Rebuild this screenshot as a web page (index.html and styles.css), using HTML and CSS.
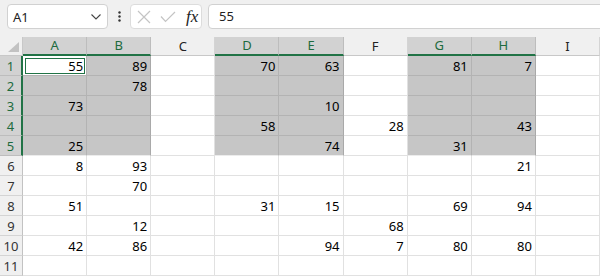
FILE: index.html
```html
<!DOCTYPE html>
<html lang="en">
<head>
    <meta charset="UTF-8">
    <meta name="viewport" content="width=device-width, initial-scale=1.0">
    <title>Sheet</title>
    <link rel="stylesheet" href="styles.css">
</head>
<body>
    <div class="formula-bar">
        <div class="name-box">
            <span>A1</span>
            <svg class="chevron" width="10" height="6" viewBox="0 0 10 6"><polyline points="0.5,0.5 5,5 9.5,0.5" fill="none" stroke="#444" stroke-width="1.1"/></svg>
        </div>
        <div class="dots">
            <svg width="3" height="11" viewBox="0 0 3 11"><circle cx="1.5" cy="1.5" r="1.2" fill="#333"/><circle cx="1.5" cy="5.5" r="1.2" fill="#333"/><circle cx="1.5" cy="9.5" r="1.2" fill="#333"/></svg>
        </div>
        <div class="fx-box">
            <svg class="icon" width="14" height="14" viewBox="0 0 14 14"><path d="M1 1 L13 13 M13 1 L1 13" stroke="#c4c4c4" stroke-width="1.2" fill="none"/></svg>
            <svg class="icon" width="16" height="12" viewBox="0 0 16 12"><polyline points="1,5.5 5.5,10.5 15,1" stroke="#c4c4c4" stroke-width="1.2" fill="none"/></svg>
            <span class="fx">fx</span>
        </div>
        <div class="formula-input">55</div>
    </div>
    <div class="sheet" id="sheet"></div>
    <script>
        const cols = ['A', 'B', 'C', 'D', 'E', 'F', 'G', 'H', 'I'];
        const selCols = ['A', 'B', 'D', 'E', 'G', 'H'];
        const edgeCols = ['B', 'E', 'H'];
        const data = {
            1: { A: 55, B: 89, D: 70, E: 63, G: 81, H: 7 },
            2: { B: 78 },
            3: { A: 73, E: 10 },
            4: { D: 58, F: 28, H: 43 },
            5: { A: 25, E: 74, G: 31 },
            6: { A: 8, B: 93, H: 21 },
            7: { B: 70 },
            8: { A: 51, D: 31, E: 15, G: 69, H: 94 },
            9: { B: 12, F: 68 },
            10: { A: 42, B: 86, E: 94, F: 7, G: 80, H: 80 },
            11: {}
        };
        const sheet = document.getElementById('sheet');
        let html = '<div class="corner"></div>';

        cols.forEach(c => {
            const cls = selCols.includes(c) ? 'col-head selected' : 'col-head';
            html += `<div class="${cls}">${c}</div>`;
        });

        for (let r = 1; r <= 11; r++) {
            const inSel = r <= 5;
            html += `<div class="row-head${inSel ? ' selected' : ''}">${r}</div>`;
            cols.forEach(c => {
                let cls = 'cell';
                if (inSel && selCols.includes(c)) {
                    cls += ' sel';
                    if (edgeCols.includes(c)) cls += ' sel-right';
                    if (r === 5) cls += ' sel-bottom';
                }
                if (r === 1 && c === 'A') cls += ' active';
                const v = data[r][c] !== undefined ? data[r][c] : '';
                html += `<div class="${cls}">${v}</div>`;
            });
        }
        sheet.innerHTML = html;
    </script>
</body>
</html>
```

FILE: styles.css
```css
body {
    margin: 0;
    padding: 0;
    width: 600px;
    height: 277px;
    overflow: hidden;
    background: #fff;
    font-family: "Noto Sans", sans-serif;
    font-size: 13px;
    color: #000;
}

/* Formula bar */
.formula-bar {
    display: flex;
    align-items: flex-start;
    height: 37px;
    padding: 4px 0 0 7px;
    box-sizing: border-box;
    background: #f0f0f0;
}

.name-box {
    display: flex;
    align-items: center;
    justify-content: space-between;
    width: 101px;
    height: 25px;
    box-sizing: border-box;
    padding: 0 6px 0 5px;
    background: #fff;
    border: 1px solid #d1d1d1;
    border-radius: 4px;
    font-size: 13px;
    color: #222;
}

.chevron {
    margin-top: 1px;
}

.dots {
    display: flex;
    align-items: center;
    justify-content: center;
    width: 22px;
    height: 25px;
}

.fx-box {
    display: flex;
    align-items: center;
    width: 72px;
    height: 25px;
    box-sizing: border-box;
    padding-left: 6px;
    gap: 9px;
    background: #fff;
    border: 1px solid #dcdcdc;
    border-radius: 4px;
}

.fx {
    font-family: "Liberation Serif", serif;
    font-style: italic;
    font-size: 17px;
    color: #222;
    margin-left: 1px;
    line-height: 20px;
}

.formula-input {
    flex: 1;
    height: 25px;
    box-sizing: border-box;
    margin-left: 6px;
    margin-right: -6px;
    padding-left: 10px;
    line-height: 23px;
    background: #fff;
    border: 1px solid #d1d1d1;
    border-radius: 4px;
    color: #222;
}

/* Grid */
.sheet {
    display: grid;
    grid-template-columns: 23px repeat(9, 1fr);
    grid-template-rows: 19px;
    grid-auto-rows: 20px;
}

.corner {
    position: relative;
    background: #f0f0f0;
    border-right: 1px solid #c8c8c8;
    border-bottom: 1px solid #c8c8c8;
}

.corner::after {
    content: "";
    position: absolute;
    right: 3px;
    bottom: 3px;
    border-left: 11px solid transparent;
    border-bottom: 10px solid #c2c2c2;
}

.col-head {
    box-sizing: border-box;
    text-align: center;
    line-height: 18px;
    background: #f0f0f0;
    border-right: 1px solid #d4d4d4;
    border-bottom: 1px solid #c8c8c8;
    color: #222;
}

.col-head.selected {
    background: #d2d2d2;
    border-right-color: #bdbdbd;
    border-bottom: 2px solid #217346;
    color: #1d6b3e;
    line-height: 17px;
}

.row-head {
    box-sizing: border-box;
    text-align: center;
    padding-top: 2px;
    line-height: 16px;
    background: #f0f0f0;
    border-right: 1px solid #c2c2c2;
    border-bottom: 1px solid #d4d4d4;
    color: #333;
}

.row-head.selected {
    background: #d2d2d2;
    border-right: 2px solid #217346;
    border-bottom-color: #bdbdbd;
    color: #1d6b3e;
}

.cell {
    box-sizing: border-box;
    text-align: right;
    padding: 2px 3px 0 0;
    line-height: 16px;
    border-right: 1px solid #e1e1e1;
    border-bottom: 1px solid #e1e1e1;
}

.cell.sel {
    background: #c6c6c6;
    border-right-color: #b3b3b3;
    border-bottom-color: #b3b3b3;
}

.cell.sel-right {
    border-right-color: #a9a9a9;
}

.cell.sel-bottom {
    border-bottom-color: #ececec;
}

.cell.active {
    background: #fff;
    outline: 1px solid #217346;
    outline-offset: -3px;
}
```
